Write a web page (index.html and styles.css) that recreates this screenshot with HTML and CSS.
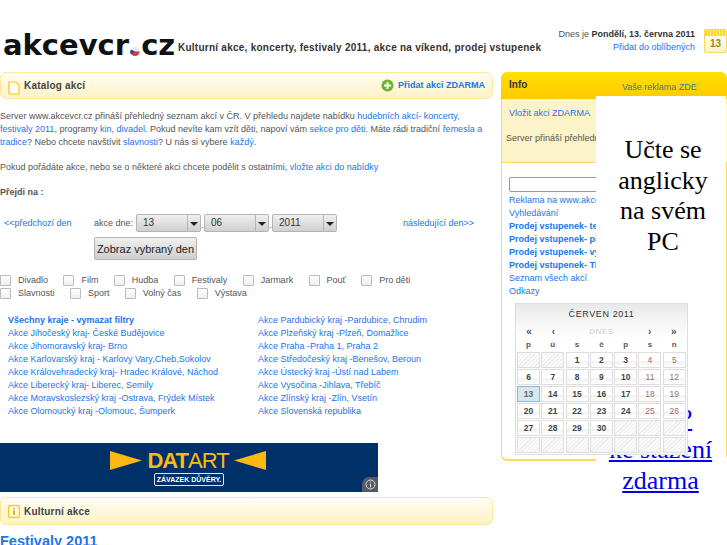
FILE: index.html
```html
<!DOCTYPE html>
<html lang="cs">
<head>
<meta charset="utf-8">
<title>akcevcr.cz</title>
<link rel="stylesheet" href="styles.css">
</head>
<body>
<div class="header">
  <div class="logo">akcevcr<svg class="flag" width="12" height="11" viewBox="0 0 12 12"><circle cx="6" cy="6" r="5" fill="#e8e8ee"/><path d="M1 6h10a5 5 0 0 1-10 0z" fill="#d23a3a"/><path d="M1.5 3.8 6 6 1.5 9.2A5 5 0 0 1 1.5 3.8z" fill="#2a4f96"/></svg>cz</div>
  <div class="tagline">Kulturní akce, koncerty, festivaly 2011, akce na víkend, prodej vstupenek</div>
  <div class="today">
    <div>Dnes je <b>Pondělí, 13. června 2011</b></div>
    <div><a href="#">Přidat do oblíbených</a></div>
  </div>
  <div class="calicon"><div class="calicon-top"></div><div class="calicon-num">13</div></div>
</div>

<div class="main">
  <div class="left">
    <div class="bar">
      <svg class="bar-icon bar-icon-low" width="12" height="14" viewBox="0 0 12 14"><path d="M1 1h7l3 3v9H1z" fill="#fffef6" stroke="#f5c518" stroke-width="1.2"/></svg>
      <span class="bar-title">Katalog akcí</span>
      <a class="bar-add" href="#"><svg width="13" height="13" viewBox="0 0 13 13"><circle cx="6.5" cy="6.5" r="6" fill="#6ab52a"/><path d="M6.5 3v7M3 6.5h7" stroke="#fff" stroke-width="2"/></svg>Přidat akci ZDARMA</a>
    </div>

    <p class="intro">Server www.akcevcr.cz přináší přehledný seznam akcí v ČR. V přehledu najdete nabídku <a href="#">hudebních akcí- koncerty, festivaly 2011</a>, programy <a href="#">kin</a>, <a href="#">divadel</a>. Pokud nevíte kam vzít děti, napoví vám <a href="#">sekce pro děti</a>. Máte rádi tradiční <a href="#">řemesla a tradice</a>? Nebo chcete navštívit <a href="#">slavnosti</a>? U nás si vybere <a href="#">každý</a>.</p>
    <p class="intro">Pokud pořádáte akce, nebo se o některé akci chcete podělit s ostatními, <a href="#">vložte akci do nabídky</a></p>
    <p class="intro"><b>Přejdi na :</b></p>

    <div class="daterow">
      <a class="prev" href="#">&lt;&lt;předchozí den</a>
      <span class="datelabel">akce dne:</span>
      <div class="sel"><span>13</span><i></i></div><span class="dot">.</span>
      <div class="sel"><span>06</span><i></i></div><span class="dot">.</span>
      <div class="sel"><span>2011</span><i></i></div>
      <a class="next" href="#">následující den&gt;&gt;</a>
    </div>
    <div class="btnrow"><button class="showbtn" type="button">Zobraz vybraný den</button></div>

    <div class="checks">
      <label><input type="checkbox">Divadlo</label>
      <label><input type="checkbox">Film</label>
      <label><input type="checkbox">Hudba</label>
      <label><input type="checkbox">Festivaly</label>
      <label><input type="checkbox">Jarmark</label>
      <label><input type="checkbox">Pouť</label>
      <label><input type="checkbox">Pro děti</label>
    </div>
    <div class="checks">
      <label><input type="checkbox">Slavnosti</label>
      <label><input type="checkbox">Sport</label>
      <label><input type="checkbox">Volný čas</label>
      <label><input type="checkbox">Výstava</label>
    </div>

    <div class="regions">
      <div class="regcol">
        <a href="#"><b>Všechny kraje - vymazat filtry</b></a>
        <a href="#">Akce Jihočeský kraj- České Budějovice</a>
        <a href="#">Akce Jihomoravský kraj- Brno</a>
        <a href="#">Akce Karlovarský kraj - Karlovy Vary,Cheb,Sokolov</a>
        <a href="#">Akce Královehradecký kraj- Hradec Králové, Náchod</a>
        <a href="#">Akce Liberecký kraj- Liberec, Semily</a>
        <a href="#">Akce Moravskoslezský kraj -Ostrava, Frýdek Místek</a>
        <a href="#">Akce Olomoucký kraj -Olomouc, Šumperk</a>
      </div>
      <div class="regcol">
        <a href="#">Akce Pardubický kraj -Pardubice, Chrudim</a>
        <a href="#">Akce Plzeňský kraj -Plzeň, Domažlice</a>
        <a href="#">Akce Praha -Praha 1, Praha 2</a>
        <a href="#">Akce Středočeský kraj -Benešov, Beroun</a>
        <a href="#">Akce Ústecký kraj -Ústí nad Labem</a>
        <a href="#">Akce Vysočina -Jihlava, Třebíč</a>
        <a href="#">Akce Zlínský kraj -Zlín, Vsetín</a>
        <a href="#">Akce Slovenská republika</a>
      </div>
    </div>

    <div class="banner">
      <div class="banner-logo">
        <svg width="32" height="19" viewBox="0 0 32 19"><polygon points="0,0 32,9.5 0,19" fill="#fdb913"/></svg>
        <span class="datart"><b>DAT</b>ART</span>
        <svg width="32" height="19" viewBox="0 0 32 19"><polygon points="32,0 0,9.5 32,19" fill="#fdb913"/></svg>
      </div>
      <div class="slogan">ZÁVAZEK DŮVĚRY.</div>
      <div class="adchoice"><svg width="11" height="11" viewBox="0 0 11 11"><circle cx="5.5" cy="5.5" r="4.5" fill="none" stroke="#ddd"/><path d="M5.5 4.5v4M5.5 2.5v1" stroke="#ddd"/></svg></div>
    </div>

    <div class="bar bar2">
      <svg class="bar-icon" width="12" height="13" viewBox="0 0 12 13"><rect x=".6" y=".6" width="10.8" height="11.8" rx="1.5" fill="#fffbe0" stroke="#f5c518" stroke-width="1.2"/><path d="M6 3v1.4M6 5.5V10" stroke="#a88a10" stroke-width="1.3"/></svg>
      <span class="bar-title">Kulturní akce</span>
    </div>
    <h2 class="fest"><a href="#">Festivaly 2011</a></h2>
  </div>

  <div class="right">
    <div class="info-head">
      <span class="info-title">Info</span>
      <a class="info-ad" href="#">Vaše reklama ZDE</a>
    </div>
    <div class="info-top">
      <a href="#">Vložit akci ZDARMA</a>
      <p>Server přináší přehledný seznam akcí</p>
    </div>
    <div class="info-body">
      <input class="search" type="text">
      <div class="info-links">
        <a href="#">Reklama na www.akcevcr.cz</a>
        <a href="#">Vyhledávání</a>
        <a href="#"><b>Prodej vstupenek- tenis</b></a>
        <a href="#"><b>Prodej vstupenek- pivo</b></a>
        <a href="#"><b>Prodej vstupenek- výstavy</b></a>
        <a href="#"><b>Prodej vstupenek- Tipsport</b></a>
        <a href="#">Seznam všech akcí</a>
        <a href="#">Odkazy</a>
      </div>
    </div>

    <div class="adbox">
      <div class="ad-head">Učte se<br>anglicky<br>na svém<br>PC</div>
      <a class="ad-link" href="#">Kurz?<br>ke stažení<br>zdarma</a>
    </div>

    <div class="cal">
      <div class="cal-title">ČERVEN 2011</div>
      <div class="cal-nav"><span>«</span><span>‹</span><span class="cal-today">DNES</span><span>›</span><span>»</span></div>
      <div class="cal-grid">
        <span class="wd">p</span><span class="wd">ú</span><span class="wd">s</span><span class="wd">č</span><span class="wd">p</span><span class="wd">s</span><span class="wd">n</span>
        <span class="d off"></span><span class="d off"></span><span class="d">1</span><span class="d">2</span><span class="d">3</span><span class="d we">4</span><span class="d we">5</span>
        <span class="d">6</span><span class="d">7</span><span class="d">8</span><span class="d">9</span><span class="d">10</span><span class="d we">11</span><span class="d we">12</span>
        <span class="d now">13</span><span class="d">14</span><span class="d">15</span><span class="d">16</span><span class="d">17</span><span class="d we">18</span><span class="d we">19</span>
        <span class="d">20</span><span class="d">21</span><span class="d">22</span><span class="d">23</span><span class="d">24</span><span class="d we">25</span><span class="d we">26</span>
        <span class="d">27</span><span class="d">28</span><span class="d">29</span><span class="d">30</span><span class="d off"></span><span class="d off"></span><span class="d off"></span>
        <span class="d off"></span><span class="d off"></span><span class="d off"></span><span class="d off"></span><span class="d off"></span><span class="d off"></span><span class="d off"></span>
      </div>
    </div>
  </div>
</div>
</body>
</html>
```

FILE: styles.css
```css
html {overflow: hidden;}
body {margin: 0; height: 545px; overflow: hidden; background: #fff; font-family: "Liberation Sans", Arial, sans-serif; font-size: 9px; line-height: 13px; color: #555;}
a {color: #2274ea; text-decoration: none;}

/*==================== Header =====================*/
.header {display: flex; align-items: flex-start; height: 72px;}
.logo {margin: 25px 0 0 3px; width: 175px; font-family: "DejaVu Sans", sans-serif; font-weight: bold; font-size: 29px; line-height: 40px; color: #111; white-space: nowrap; flex: none;}
.flag {margin: 0 0 -2px 0;}
.tagline {margin-top: 41px; font-weight: bold; font-size: 10px; letter-spacing: .25px; color: #333; white-space: nowrap; flex: none;}
.today {margin: 28px 0 0 0; flex: 1; text-align: right; color: #555;}
.today div {height: 13px;}
.today b {color: #333;}
.calicon {margin: 29px 0 0 9px; width: 23px; height: 24px; box-sizing: border-box; border: 1px solid #f8d860; border-radius: 2px; flex: none; background: linear-gradient(#fff, #fdf3c4);}
.calicon-top {height: 6px; background: repeating-linear-gradient(90deg, #ffd81e 0 2px, #fff3a8 2px 3px);}
.calicon-num {text-align: center; font-size: 10px; font-weight: bold; line-height: 16px; color: #9a8a20;}

/*==================== Layout =====================*/
.main {display: flex; position: relative; align-items: flex-start;}
.left {width: 493px; flex: none;}
.right {width: 226px; margin-left: 8px; flex: none; position: relative;}

/*==================== Left column =====================*/
.bar {display: flex; align-items: center; height: 27px; box-sizing: border-box; border: 1px solid #fde89e; border-radius: 6px; background: linear-gradient(#fffdf2, #fef2c6); padding: 0 7px 0 7px;}
.bar-icon {margin-right: 4px; flex: none;}
.bar-icon-low {margin-top: 4px;}
.bar-title {font-weight: bold; font-size: 10px; letter-spacing: .2px; color: #444;}
.bar-add {margin-left: auto; display: flex; align-items: center; gap: 4px; font-weight: bold; font-size: 9px;}
.bar2 {height: 28px; margin-top: 5px;}
.intro {margin: 0 0 12px 0; max-width: 485px;}
.bar + .intro {margin-top: 11px;}
.daterow {display: flex; align-items: center; height: 18px; margin-top: 15px; position: relative;}
.prev {margin-left: 4px; width: 90px; flex: none;}
.datelabel {margin-right: 3px;}
.dot {width: 3px; text-align: center; align-self: flex-end;}
.next {margin-left: 66px;}
.sel {display: flex; align-items: stretch; width: 65px; height: 18px; box-sizing: border-box; border: 1px solid #b4b4b4; border-radius: 2px; background: linear-gradient(#f0f0f0, #cfcfcf); font-size: 10px; color: #333;}
.sel span {flex: 1; padding-left: 6px; line-height: 16px;}
.sel i {position: relative; width: 12px; border-left: 1px solid #b4b4b4;}
.sel i::after {content: ""; position: absolute; left: 2px; top: 7px; border: 4px solid transparent; border-top-color: #222; border-bottom: 0;}
.btnrow {margin: 5px 0 0 94px;}
.showbtn {display: block; width: 103px; height: 23px; padding: 0; border: 1px solid #b4b4b4; border-radius: 2px; background: linear-gradient(#f0f0f0, #cfcfcf); font-family: "Liberation Sans", sans-serif; font-size: 11px; color: #222;}
.checks {display: flex; height: 13px;}
.btnrow + .checks {margin-top: 14px;}
.checks label {display: flex; align-items: center; white-space: nowrap; margin-right: 15.4px; color: #555;}
.checks input {appearance: none; -webkit-appearance: none; margin: 0 7px 0 0; width: 11px; height: 11px; box-sizing: border-box; border: 1px solid #bbb; border-radius: 1px; background: linear-gradient(#fff, #eee);}
.regions {display: flex; margin: 14px 0 0 8px;}
.regcol {width: 250px; flex: none;}
.regcol a {display: block; height: 13px; white-space: nowrap;}
.banner {position: relative; width: 378px; height: 49px; margin-top: 25px; background: #003068; display: flex; flex-direction: column; align-items: center; box-sizing: border-box; padding-top: 8px;}
.banner-logo {display: flex; align-items: center; height: 19px; margin-left: -2px;}
.datart {font-size: 22px; line-height: 19px; font-weight: normal; color: #fdb913; letter-spacing: -1px; width: 92px; text-align: center; white-space: nowrap;}
.slogan {margin-top: 3px; border: 1px solid #dfe6f2; border-radius: 2px; padding: 0 2px; font-size: 7px; line-height: 11px; font-weight: bold; color: #fff;}
.adchoice {position: absolute; right: 0; bottom: 0; width: 16px; height: 15px; background: #555a66; border-top-left-radius: 7px; display: flex; align-items: center; justify-content: center;}
.fest {margin: 7px 0 0 0; font-size: 14.5px; line-height: 18px; font-weight: bold;}

/*==================== Right column =====================*/
.info-head {display: flex; align-items: center; height: 27px; box-sizing: border-box; padding-left: 8px; border-radius: 6px 6px 0 0; background: linear-gradient(#ffe200, #ffc800);}
.info-title {font-weight: bold; font-size: 10px; color: #333; width: 113px; margin-top: -2px;}
.info-ad {color: #3a7a9a; margin-top: 3px;}
.info-top {height: 64px; box-sizing: border-box; background: #fdf3c9; border-left: 1px solid #fed95e; border-bottom: 1px solid #fed95e; padding: 8px 0 0 7px; overflow: hidden;}
.info-top a {display: block;}
.info-top p {margin: 12px 0 0 -3px; white-space: nowrap;}
.info-body {height: 298px; box-sizing: border-box; border: 1px solid #fed95e; border-width: 0 1px 2px 1px; border-radius: 0 0 6px 6px; padding: 14px 0 0 7px;}
.search {display: block; width: 120px; height: 15px; box-sizing: border-box; border: 1px solid #999; border-radius: 2px; padding: 0; margin: 0;}
.info-links {margin-top: 2px;}
.info-links a {display: block; height: 13px; white-space: nowrap;}

/*==================== Overlays =====================*/
.adbox {position: absolute; left: 95px; top: 24px; width: 130px; height: 429px; box-sizing: border-box; padding-left: 4px; background: #fff; display: flex; flex-direction: column; align-items: center; text-align: center; font-family: "Liberation Serif", serif;}
.ad-head {margin-top: 39px; font-size: 26px; line-height: 30.6px; color: #000;}
.ad-link {margin: 147px 0 0 -5px; font-size: 26px; line-height: 30.6px; color: #00e; text-decoration: underline;}
.cal {position: absolute; left: 14px; top: 231px; width: 173px; height: 152px; box-sizing: border-box; border: 1px solid #ddd; background: #fff; padding: 0 1px;}
.cal-title {margin: 0 -1px; height: 20px; line-height: 20px; text-align: center; letter-spacing: .6px; color: #333; background: linear-gradient(#e8e8e8, #f8f8f8);}
.cal-nav {display: grid; grid-template-columns: 24.3px 24.3px 1fr 24.3px 24.3px; height: 15px; line-height: 15px; text-align: center; font-size: 10px; font-weight: bold; color: #555; background: linear-gradient(#f6f6f6, #fff);}
.cal-today {color: #ccc; font-size: 8px; letter-spacing: .6px; font-weight: normal;}
.cal-grid {display: grid; grid-template-columns: repeat(7, 23px); grid-template-rows: 12px repeat(6, 16px); gap: 1px 1.3px;}
.wd {text-align: center; font-size: 8px; font-weight: bold; line-height: 12px; color: #555;}
.d {box-sizing: border-box; border: 1px solid #ddd; text-align: center; font-size: 8.5px; font-weight: bold; line-height: 14px; color: #444; background: linear-gradient(#fff 55%, #f1f1f1 56%, #fff);}
.we {color: #a56a6a; font-weight: normal;}
.off {background: repeating-linear-gradient(135deg, #eee 0 1px, #fafafa 1px 3px);}
.now {border-color: #8ab4d8; background: #d4e8ee; color: #666;}
```
